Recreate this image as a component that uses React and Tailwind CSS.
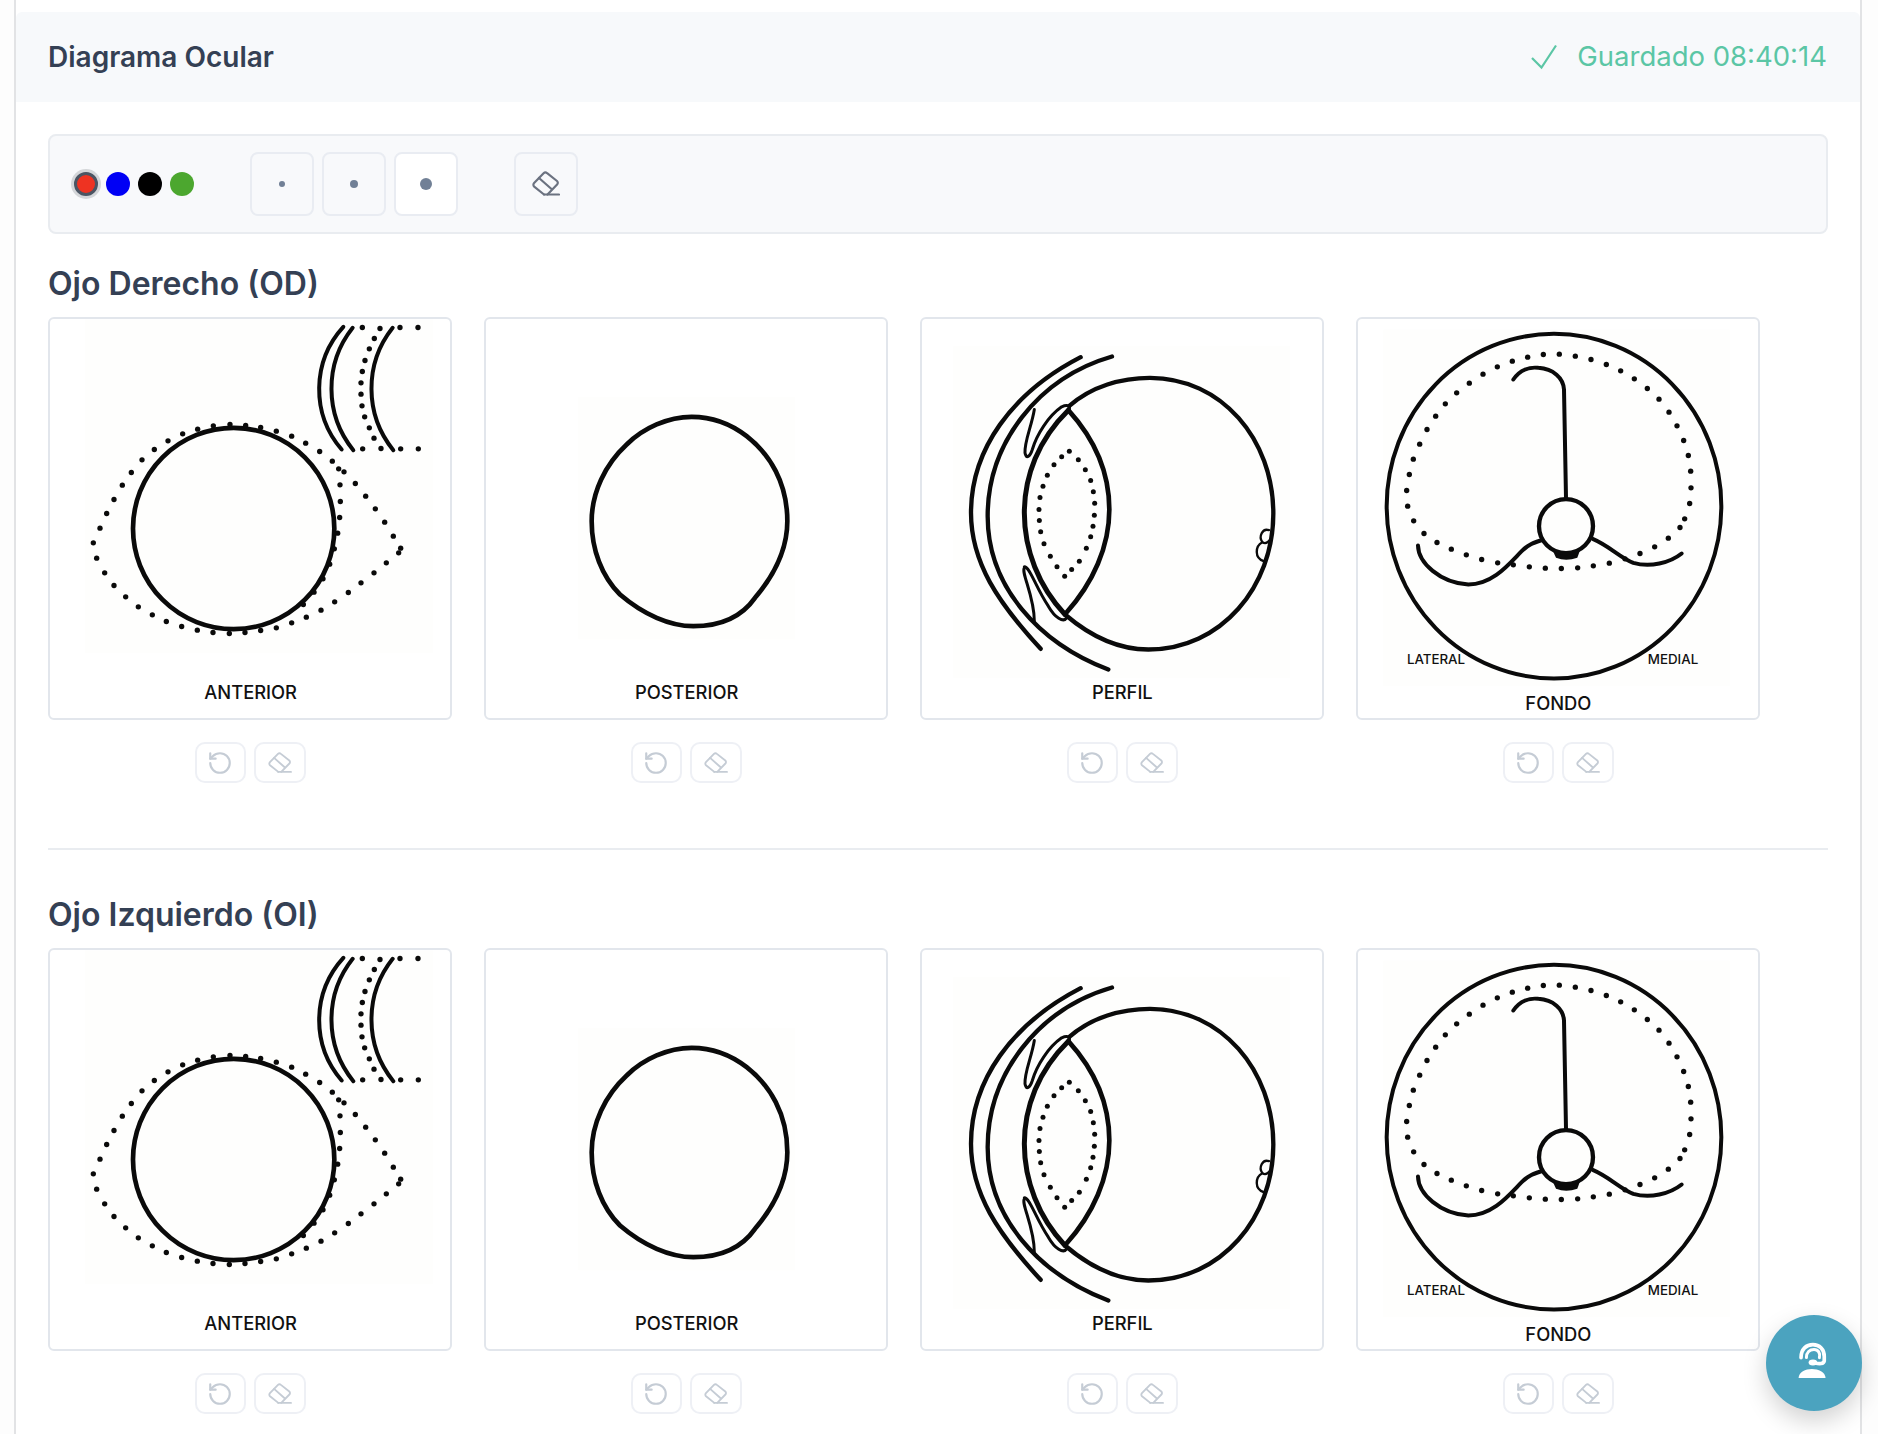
import React from "react";
import { RotateCcw } from "lucide-react";

const INK = "#0a0a0a";

function EraserIcon({ className }) {
  return (
    <svg viewBox="0 0 28 26" className={className} fill="none" stroke="currentColor" strokeWidth="2.2" strokeLinecap="round" strokeLinejoin="round">
      <path d="M12 23.5 L2.2 15.6 a2.5 2.5 0 0 1 -0.1 -3.6 L11.6 2.3 a2.5 2.5 0 0 1 3.5 -0.1 L25 10 a2.5 2.5 0 0 1 0.1 3.6 L15.5 23.5" />
      <path d="M7 7 L19.5 18" />
      <path d="M12 23.5 H27" />
    </svg>
  );
}

function Dots({ pts, r = 8 }) {
  return (
    <g fill={INK}>
      {pts.map(([x, y], i) => (
        <circle key={i} cx={x} cy={y} r={r} />
      ))}
    </g>
  );
}

function Label({ x, y, size = 55, weight = 500, children }) {
  return (
    <text x={x} y={y} textAnchor="middle" fontSize={size} fontWeight={weight} fill="#111" fontFamily="Inter, sans-serif">
      {children}
    </text>
  );
}

const anteriorDots = [
  [160,700],[180,656],[200,612],[222,570],[247,527],[274,489],[306,451],[343,420],[384,394],[428,373],[473,359],[520,349],[570,345],[617,348],[662,354],[709,365],[755,380],[797,401],[839,426],[877,455],[912,487],[946,522],[977,560],[1006,598],[1034,638],[1060,680],[1082,716],
  [170,746],[194,790],[222,828],[257,862],[295,892],[337,916],[379,936],[425,951],[472,962],[519,969],[568,972],[615,969],[662,963],[709,955],[755,940],[799,923],[843,902],[884,877],[925,849],[963,820],[1002,790],[1039,760],[1076,730],
  [896,478],[900,526],[901,576],[899,624],[893,671],[883,718],[869,764],[849,808],[822,848],[790,885],
  [1020,57],[1003,87],[988,118],[975,153],[967,186],[963,220],[963,254],[966,289],[974,322],[988,355],[1002,386],[1023,417],
  [967,54],[1080,54],[1134,54],[968,418],[1082,418],[1135,418],
];

function Anterior() {
  return (
    <g transform="translate(-10 -9.5) scale(0.33333)">
      <rect x="135" y="30" width="1045" height="1000" fill="#fefefd" />
      <circle cx="581" cy="657" r="302" fill="none" stroke={INK} strokeWidth="14" />
      <g fill="none" stroke={INK} strokeWidth="12" strokeLinecap="round">
        <path d="M910 52 A277 277 0 0 0 905 420" />
        <path d="M938 55 A293 293 0 0 0 940 422" />
        <path d="M1058 55 A293 293 0 0 0 1060 422" />
      </g>
      <Dots pts={anteriorDots} />
      <Label x={632} y={1170}>ANTERIOR</Label>
    </g>
  );
}

function Posterior() {
  return (
    <g transform="translate(-6 -9.5) scale(0.33333)">
      <rect x="295" y="262" width="650" height="728" fill="#fefefd" />
      <path
        d="M635 322 C700 322 755 345 800 380 C870 435 922 520 922 635 C922 720 880 800 825 865 C790 915 730 950 640 950 C570 950 490 915 420 855 C365 800 335 720 335 635 C335 550 375 465 440 405 C490 355 565 322 635 322Z"
        fill="none"
        stroke={INK}
        strokeWidth="14"
      />
      <Label x={620} y={1170}>POSTERIOR</Label>
    </g>
  );
}

const perfilDots = [
  [463,425],[440,442],[417,466],[397,497],[384,530],[375,564],[372,600],[373,633],[377,667],[387,703],[406,740],[426,772],[449,800],[470,780],[493,755],[514,716],[527,682],[534,650],[538,617],[539,581],[535,547],[527,513],[511,481],[490,451],
];

function Perfil() {
  return (
    <g transform="translate(-7 -9.5) scale(0.33333)">
      <rect x="115" y="110" width="1010" height="995" fill="#fefefd" />
      <g fill="none" stroke={INK} strokeLinecap="round">
        <path strokeWidth="13" d="M462 290 C530 230 620 205 705 205 C920 205 1075 390 1075 612 C1075 830 920 1020 700 1020 C600 1020 520 975 450 915" />
        <path strokeWidth="15" d="M460 302 C370 390 328 500 328 610 C328 720 370 830 450 915" />
        <path strokeWidth="14" d="M460 302 C540 390 583 490 583 600 C583 710 535 820 452 912" />
        <path strokeWidth="13" d="M497 143 C290 250 168 420 168 610 C168 760 250 880 377 1018" />
        <path strokeWidth="13" d="M591 141 C370 205 218 400 218 620 C218 830 370 1000 580 1080" />
        <path strokeWidth="9" d="M358 300 C350 350 328 395 330 430 C333 450 345 442 352 420 C365 375 400 320 440 292 C458 284 468 290 462 300" />
        <path strokeWidth="9" d="M328 775 C318 790 358 860 358 935" />
        <path strokeWidth="9" d="M328 772 C345 772 360 830 400 890 C420 925 445 940 455 925" />
        <path strokeWidth="7" d="M1062 662 C1042 655 1030 682 1042 698 C1052 705 1060 698 1066 690" />
        <path strokeWidth="7" d="M1042 698 C1020 710 1018 745 1046 755" />
      </g>
      <Dots pts={perfilDots} r={7.5} />
      <Label x={622} y={1169}>PERFIL</Label>
    </g>
  );
}

const fondoDots = [
  [170,543],[178,495],[190,449],[209,404],[231,360],[257,320],[286,283],[320,250],[358,221],[399,194],[442,172],[487,155],[533,143],[580,135],[628,134],[676,140],[723,150],[769,165],[812,184],[853,208],[892,237],[927,269],[957,308],[981,349],[1001,393],[1015,438],[1022,485],[1023,535],[1019,582],[1004,628],[990,654],[955,686],[914,712],[870,732],[825,748],[778,761],[730,769],[683,775],[634,777],[586,776],[538,772],[490,766],[443,760],[395,750],[349,736],[304,719],[261,699],[222,672],[191,634],[173,590],
];

function Fondo() {
  return (
    <g transform="translate(-8 -9.5) scale(0.33333)">
      <rect x="100" y="60" width="1040" height="1070" fill="#fefefd" />
      <ellipse cx="612" cy="590" rx="502" ry="517" fill="none" stroke={INK} strokeWidth="12" />
      <Dots pts={fondoDots} />
      <path d="M608 722 L690 722 L682 745 Q648 757 618 745 Z" fill={INK} />
      <circle cx="648" cy="650" r="81" fill="#fefefd" stroke={INK} strokeWidth="13" />
      <g fill="none" stroke={INK} strokeLinecap="round">
        <path strokeWidth="12" d="M490 210 C510 180 540 172 565 175 C610 178 640 205 642 240 L648 565" />
        <path strokeWidth="12" d="M204 708 C205 760 270 820 355 825 C430 825 480 760 515 725 C535 705 550 700 572 693" />
        <path strokeWidth="12" d="M728 688 C780 710 810 745 850 760 C900 775 960 760 995 732" />
      </g>
      <Label x={258} y={1063} size={40}>LATERAL</Label>
      <Label x={969} y={1063} size={40}>MEDIAL</Label>
      <Label x={625} y={1203}>FONDO</Label>
    </g>
  );
}

const DIAGRAMS = [Anterior, Posterior, Perfil, Fondo];

function DiagramCard({ Drawing }) {
  return (
    <div className="w-[404px]">
      <div className="h-[403px] w-[404px] rounded-md border-2 border-[#e2e6ec] bg-white">
        <svg viewBox="0 0 400 399" className="block h-[399px] w-[400px]">
          <Drawing />
        </svg>
      </div>
      <div className="mt-[22px] flex justify-center gap-2">
        <button className="flex h-[41px] w-[51px] items-center justify-center rounded-[10px] border-2 border-[#eef0f5] bg-white text-[#c5ccd5]">
          <RotateCcw size={26} strokeWidth={2} />
        </button>
        <button className="flex h-[41px] w-[52px] items-center justify-center rounded-[10px] border-2 border-[#eef0f5] bg-white text-[#c5ccd5]">
          <EraserIcon className="h-[22px] w-[24px]" />
        </button>
      </div>
    </div>
  );
}

function EyeSection({ title, className }) {
  return (
    <section className={className}>
      <h2 className="h-[36px] text-[32px] leading-[36px] font-semibold text-[#344054]">{title}</h2>
      <div className="mt-[15px] flex gap-8">
        {DIAGRAMS.map((D, i) => (
          <DiagramCard key={i} Drawing={D} />
        ))}
      </div>
    </section>
  );
}

function SizeButton({ dot, active }) {
  return (
    <button className={`flex h-[64px] w-[64px] items-center justify-center rounded-lg border-2 border-[#e9ecf2] ${active ? "bg-white" : "bg-[#f8f9fb]"}`}>
      <span className={`block rounded-full bg-[#718096] ${dot}`} />
    </button>
  );
}

export default function App() {
  return (
    <div className="h-[1434px] overflow-hidden bg-[#fdfdfd] font-['Inter',sans-serif]">
      <div className="ml-[14px] mr-[16px] h-full border-x-2 border-[#e2e3e5] bg-white pt-[12px]">
        <header className="flex h-[90px] items-center justify-between rounded-t-md bg-[#f7f9fb] pl-[32px] pr-[33px]">
          <h1 className="text-[28px] font-semibold text-[#344054]">Diagrama Ocular</h1>
          <div className="flex items-center gap-[20px] text-[27.5px] text-[#5bc6a5]">
            <svg viewBox="0 0 26 26" className="h-[26px] w-[26px]" fill="none" stroke="currentColor" strokeWidth="2.2">
              <path d="M1 14 L10.5 23.5 L25 1.5" />
            </svg>
            <span>Guardado 08:40:14</span>
          </div>
        </header>
        <div className="pl-[32px] pr-[32px]">
          <div className="mt-[32px] flex h-[100px] items-center rounded-lg border-2 border-[#e9ecf0] bg-[#f8f9fb] pl-[24px]">
            <div className="flex items-center gap-2">
              <span className="block h-6 w-6 rounded-full border-[3px] border-[#4b5563] bg-[#ee3322] shadow-[0_0_0_3px_#d4d6d9]" />
              <span className="block h-6 w-6 rounded-full bg-[#0000f5]" />
              <span className="block h-6 w-6 rounded-full bg-black" />
              <span className="block h-6 w-6 rounded-full bg-[#4ca72f]" />
            </div>
            <div className="ml-[56px] flex items-center gap-2">
              <SizeButton dot="h-[6px] w-[6px]" />
              <SizeButton dot="h-2 w-2" />
              <SizeButton dot="h-3 w-3" active />
            </div>
            <button className="ml-[56px] flex h-[64px] w-[64px] items-center justify-center rounded-lg border-2 border-[#e9ecf2] bg-[#f8f9fb] text-[#6b7280]">
              <EraserIcon className="h-[26px] w-[28px]" />
            </button>
          </div>
          <EyeSection title="Ojo Derecho (OD)" className="mt-[32px]" />
          <hr className="mt-[65px] border-t-2 border-[#e9ecf0]" />
          <EyeSection title="Ojo Izquierdo (OI)" className="mt-[47px]" />
        </div>
      </div>
      <button className="fixed bottom-[23px] right-[16px] flex h-[96px] w-[96px] items-center justify-center rounded-full bg-[#4ba3bf] shadow-[0_10px_24px_rgba(0,0,0,0.18)]">
        <svg viewBox="0 0 50 50" className="h-[54px] w-[54px]">
          <path d="M10.7 39 C11 33 17 30.5 23 30.5 C29 30.5 35.5 33 35.7 39 Z" fill="#fff" />
          <g fill="none" stroke="#fff" strokeLinecap="round">
            <path strokeWidth="3.4" d="M13 20 C13 12 18 8 24 8 C30 8 34.5 12 34.5 19 V23 C34 26 30 26 26 25" />
            <path strokeWidth="2.8" d="M18 20 C18 15 21 12.5 25 12.5 C29 12.5 31 16 30 20" />
          </g>
          <ellipse cx="24" cy="24.5" rx="4" ry="2.8" fill="#fff" />
        </svg>
      </button>
    </div>
  );
}
